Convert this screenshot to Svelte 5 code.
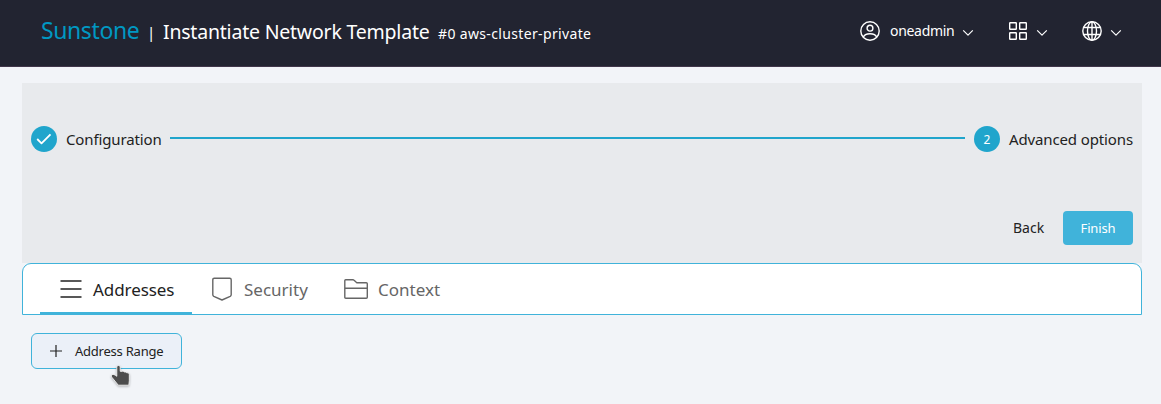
<script>
  const tabs = [
    { label: 'Addresses', icon: 'menu', active: true },
    { label: 'Security', icon: 'shield', active: false },
    { label: 'Context', icon: 'folder', active: false }
  ];
</script>

{#snippet chevron()}
  <svg class="chevron" width="12" height="8" viewBox="0 0 12 8"><path d="M1.2 1.3 6 6.200l4.800-4.900" /></svg>
{/snippet}

<div class="page">
  <header>
    <div class="title">
      <span class="brand">Sunstone</span>
      <span class="bar">|</span>
      <span class="heading">Instantiate Network Template</span>
      <span class="sub">#0 aws-cluster-private</span>
    </div>
    <nav>
      <button class="user">
        <svg width="20" height="20" viewBox="0 0 20 20">
          <circle cx="10" cy="10" r="9.2" />
          <circle cx="10" cy="7.2" r="2.900" />
          <path d="M3.300 16.400c.8-2.500 3.200-3.700 6.700-3.700s5.900 1.200 6.700 3.700" />
        </svg>
        <span>oneadmin</span>
        {@render chevron()}
      </button>
      <button class="apps">
        <svg width="18" height="18" viewBox="0 0 18 18">
          <rect x=".7" y=".7" width="6.600" height="6.600" rx=".5" />
          <rect x="10.700" y=".7" width="6.600" height="6.600" rx=".5" />
          <rect x=".7" y="10.700" width="6.600" height="6.600" rx=".5" />
          <rect x="10.700" y="10.700" width="6.600" height="6.600" rx=".5" />
        </svg>
        {@render chevron()}
      </button>
      <button class="globe">
        <svg width="20" height="20" viewBox="0 0 20 20">
          <circle cx="10" cy="10" r="9.200" />
          <ellipse cx="10" cy="10" rx="4.500" ry="9.200" />
          <path d="M10 .8v18.400M1.700 6.500h16.600M1.700 13.500h16.600" />
        </svg>
        {@render chevron()}
      </button>
    </nav>
  </header>

  <main>
    <section class="stepper">
      <div class="steps">
        <span class="dot"><svg width="16" height="12" viewBox="0 0 16 12"><path d="M1.200 6l4.300 4.300L14.500 1.300" /></svg></span>
        <span class="label config">Configuration</span>
        <span class="line"></span>
        <span class="dot">2</span>
        <span class="label advanced">Advanced options</span>
      </div>
      <div class="actions">
        <button class="back">Back</button>
        <button class="finish">Finish</button>
      </div>
    </section>

    <div class="tabs">
      {#each tabs as tab}
        <button class="tab {tab.icon}" class:active={tab.active}>
          {#if tab.icon === 'menu'}
            <svg width="22" height="18" viewBox="0 0 22 18"><path d="M.5 1h21M.5 9h21M.5 17h21" /></svg>
          {:else if tab.icon === 'shield'}
            <svg width="20" height="24" viewBox="0 0 20 24"><path d="M2.300 1.200h15.400q1.500 0 1.500 1.500v15.100q0 1.100-1 1.600L10 23l-8.200-3.600q-1-.5-1-1.600V2.700q0-1.500 1.500-1.500Z" /></svg>
          {:else}
            <svg width="24" height="20" viewBox="0 0 24 20"><path d="M1.600.8h7.300q.7 0 1.200.5l2.700 2.500h9.500q1 0 1 1v13.400q0 1-1 1H1.800q-1 0-1-1V1.600q0-.8.800-.8ZM.8 9.200h22.500" /></svg>
          {/if}
          <span>{tab.label}</span>
        </button>
      {/each}
    </div>

    <div class="content">
      <button class="add">
        <svg width="12" height="12" viewBox="0 0 12 12"><path d="M6 0v12M0 6h12" /></svg>
        <span>Address Range</span>
        <svg class="pointer" width="22" height="24" viewBox="0 0 22 24">
          <path d="M8.500 1.500c1.200 0 1.700.8 1.700 1.800v4l1.500.2c.8-.5 2-.3 2.600.5 1-.3 1.900 0 2.400.8 1.300-.2 2.600.5 2.600 1.800v6.200l-.5 4.400H8.300l-6.500-8c-1-1.500-.2-2.700 1.400-2.800 1.500.2 2.500.9 3.600 1.900V3.300c0-1 .6-1.800 1.700-1.800Z" />
        </svg>
      </button>
    </div>
  </main>
</div>

<style>
  :global(body) { margin: 0; background: #f2f4f8; }
  .page { height: 404px; overflow: hidden; background: #f2f4f8; color: #222; font-family: "Noto Sans", sans-serif; }
  .page * { box-sizing: border-box; }
  button { display: flex; align-items: center; border: 0; padding: 0; background: none; color: inherit; font: inherit; white-space: nowrap; }
  svg { display: block; flex: none; fill: none; stroke: currentColor; stroke-width: 1.4; stroke-linejoin: round; }
  span { white-space: nowrap; flex: none; }
  header { display: flex; justify-content: space-between; height: 67px; padding: 0 40px 4px 41px; color: #fff; background: #222431; border-bottom: 1px solid #40364a; }
  .title { display: flex; align-items: baseline; padding-top: 14px; line-height: 32px; }
  .brand { width: 106px; font-size: 23px; letter-spacing: -.4px; color: #0098c3; }
  .bar { width: 16px; font-size: 15px; position: relative; top: -1px; }
  .heading { width: 275px; font-size: 19.500px; letter-spacing: -.21px; }
  .sub { font-size: 14px; letter-spacing: .35px; }
  nav { display: flex; align-items: center; }
  .user { width: 148px; font-size: 14px; }
  .user span { width: 72px; margin: -2px 0 0 10px; letter-spacing: -.3px; text-align: left; }
  .apps { width: 74px; padding-left: 1px; }
  .globe { width: 39px; }
  .chevron { margin: 3px 0 0 auto; stroke-width: 1.200; }
  .user .chevron { margin-left: 0; }
  .apps .chevron { margin-left: 9px; }
  .globe .chevron { margin-left: 8px; }
  main { padding: 16px 19px 0 22px; }
  .stepper { height: 180px; padding: 43px 9px 0; background: #e8eaed; }
  .steps { display: flex; align-items: center; height: 26px; }
  .dot { display: flex; align-items: center; justify-content: center; width: 26px; height: 26px; border-radius: 50%; color: #fff; background: #20a5cc; font-size: 12px; }
  .dot svg { stroke-width: 1.800; }
  .label { margin-left: 9px; font-size: 15px; line-height: 24px; letter-spacing: -.13px; }
  .config { width: 95px; }
  .advanced { width: 124px; }
  .line { flex: 1 1 0; height: 2px; margin: 0 9px; background: #20a5cc; position: relative; top: -1px; }
  .actions { display: flex; justify-content: flex-end; margin-top: 59px; }
  .back { width: 50px; height: 34px; padding-bottom: 2px; font-size: 14px; }
  .finish { justify-content: center; width: 70px; height: 34px; border-radius: 4px; color: #fff; background: #40b3da; font-size: 13px; letter-spacing: -.15px; }
  .tabs { display: flex; height: 52px; padding-left: 17px; border: 1px solid #40b3da; border-radius: 9px 9px 0 0; background: #fff; }
  .tab { height: 50px; font-size: 17px; color: #666; border-bottom: 2px solid transparent; padding-top: 1px; }
  .tab.active { color: #222; border-bottom-color: #40b3da; }
  .tab span { padding-top: 2px; }
  .menu { width: 152px; padding-left: 20px; }
  .menu span { margin-left: 11px; letter-spacing: -.07px; }
  .folder span { margin-left: 10px; }
  .shield { width: 132px; padding-left: 20px; }
  .shield span { margin-left: 12px; }
  .folder { padding-left: 20px; }
  .content { padding: 18px 9px; }
  .add { position: relative; width: 151px; height: 36px; padding-left: 18px; border: 1px solid #40b3da; border-radius: 6px; background: #ebf0f8; font-size: 13px; }
  .add svg { stroke-width: 1.200; }
  .add span { margin-left: 13px; letter-spacing: -.23px; }
  .add .pointer { position: absolute; left: 78px; top: 30px; fill: #4d4d4d; stroke: #fff; stroke-width: .8; filter: drop-shadow(0 1px 1px #0004); }
</style>
